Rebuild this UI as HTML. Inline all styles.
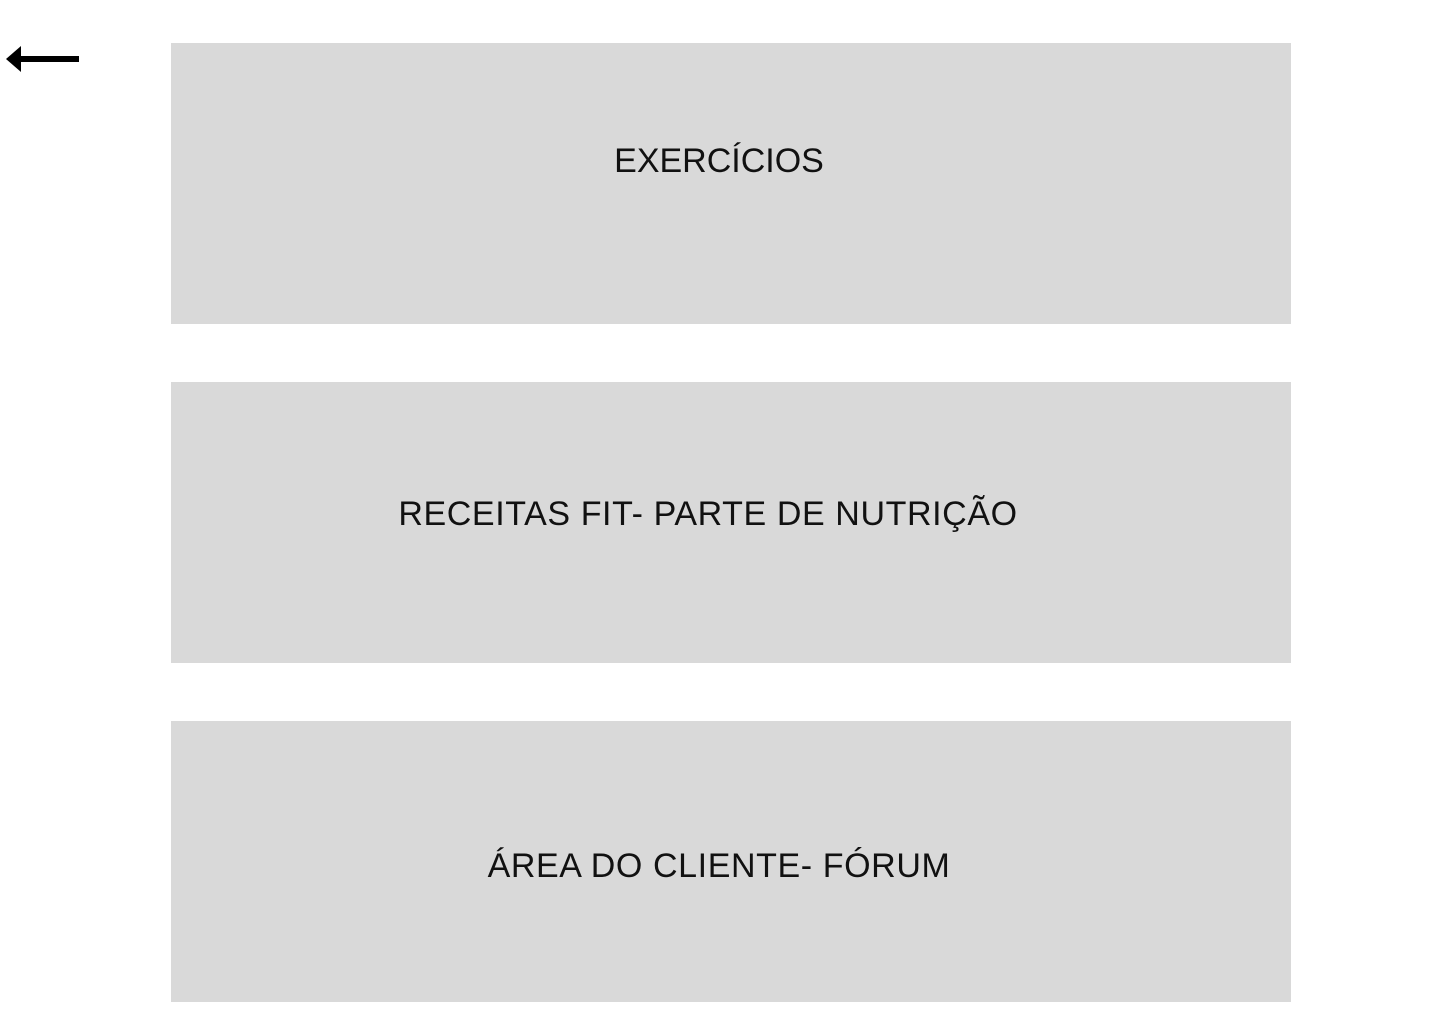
<!DOCTYPE html>
<html><head><style>
body{margin:0;width:1440px;height:1024px;background:#fff;position:relative;overflow:hidden;font-family:"Liberation Sans",sans-serif;}
.b{position:absolute;left:171px;width:1120px;height:281px;background:#d9d9d9;}
.t{position:absolute;font-size:34px;color:#111;white-space:nowrap;line-height:40px;transform:translateX(-50%);letter-spacing:0.6px;}
</style></head><body>
<svg style="position:absolute;left:0;top:40px" width="90" height="40">
<rect x="16" y="16" width="63" height="6" fill="#000"/>
<polygon points="6,19 21,6 21,32" fill="#000"/>
</svg>
<div class="b" style="top:43px"><div class="t" style="left:548px;top:98px;letter-spacing:0">EXERCÍCIOS</div></div>
<div class="b" style="top:382px"><div class="t" style="left:537px;top:112px">RECEITAS FIT- PARTE DE NUTRIÇÃO</div></div>
<div class="b" style="top:721px"><div class="t" style="left:548px;top:125px">ÁREA DO CLIENTE- FÓRUM</div></div>
</body></html>
